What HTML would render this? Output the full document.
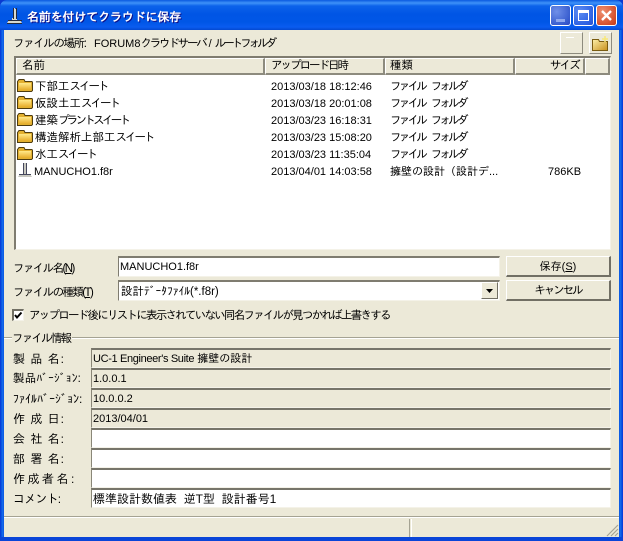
<!DOCTYPE html>
<html lang="ja"><head><meta charset="utf-8"><style>
html,body{margin:0;padding:0;background:#0a3ad0}
#w{position:relative;width:623px;height:541px;overflow:hidden;background:#0831d9;font:11px/14px "Liberation Sans","IPAGothic","Noto Sans CJK JP",sans-serif;color:#000;border-radius:7px 7px 0 0}
#w *{box-sizing:border-box}
.a{position:absolute;white-space:nowrap}
#tb{left:0;top:0;width:623px;height:30px;background:linear-gradient(180deg,#0a5ae0 0,#3f92f8 3px,#0c62ea 6px,#0055e5 14px,#0056e6 22px,#0a5cf0 27px,#0449d0 30px);border-radius:7px 7px 0 0}
#lb{left:0;top:30px;width:4px;height:511px;background:linear-gradient(90deg,#0831d9,#0855dd,#166aee,#0855dd)}
#rb{left:619px;top:30px;width:4px;height:511px;background:linear-gradient(90deg,#0855dd,#166aee,#0855dd,#0831d9)}
#bb{left:0;top:537px;width:623px;height:4px;background:#0a45d8}
#c{left:4px;top:30px;width:615px;height:507px;background:#ece9d8}
#title{left:27px;top:9px;color:#fff;font-size:12px;line-height:16px;letter-spacing:-.15px;font-weight:bold;text-shadow:1px 1px 0 #0f1089}
.wb{top:5px;width:21px;height:21px;border-radius:3px;border:1px solid #fff}
.lbl{left:13px}
.k{font-size:11.500px;letter-spacing:-1.600px}
.s{font-size:12px;letter-spacing:1px}
.fld{left:91px;width:520px;height:20px;border:1px solid;border-color:#7f7c70 #f4f2e8 #f4f2e8 #8a8778;border-top:2px solid #77756a;padding:2px 0 0 1px;line-height:14px;background:#ece9d8}
.w{background:#fff}
.hd{top:58px;height:17px;background:#ece9d8;border-right:2px solid #8d8b7e;border-bottom:2px solid #8d8b7e;border-top:1px solid #fff;border-left:1px solid #fff;padding-left:5px;line-height:15px;font-size:11.500px}
.r{line-height:14px}
.n{font-size:11.500px}
.n span{letter-spacing:-2px}
.t{font-size:11.500px;letter-spacing:-2.700px;word-spacing:5px;left:390px}
.btn{left:506px;width:105px;height:21px;background:#ece9d8;border:1px solid;border-color:#fff #716f64 #716f64 #fff;border-right-width:2px;border-bottom-width:2px;text-align:center;line-height:18px;padding-top:1px}
u{text-decoration:underline}
</style></head><body><div id="w">
<div class="a" id="tb"></div>
<div class="a" id="lb"></div><div class="a" id="rb"></div><div class="a" id="bb"></div>
<div class="a" id="c"></div>

<svg class="a" style="left:6px;top:7px" width="18" height="17" viewBox="0 0 18 17"><path d="M7 1h2v1h1v9h1v2h3l2 3H1l2-3h3v-2h1V2z" fill="#d8d8d0"/><path d="M7 1h1v11H7zM10 1h1v11h-1zM2 13h14v1H2zM1 16h15v1H1z" fill="#262a3c"/></svg>
<div class="a" id="title">名前を付けてクラウドに保存</div>

<div class="a wb" style="left:550px;background:radial-gradient(circle at 30% 30%,#6f8fe8,#3a5fd0 70%,#2c49c2)"></div>
<div class="a" style="left:556px;top:19px;width:9px;height:3px;background:#8fa8ee"></div>
<div class="a wb" style="left:573px;background:radial-gradient(circle at 30% 30%,#5d8cf2,#2f63e3 70%,#2a50d0)"></div>
<div class="a" style="left:578px;top:10px;width:11px;height:11px;border:1px solid #fff;border-top:3px solid #fff"></div>
<div class="a wb" style="left:596px;background:radial-gradient(circle at 30% 30%,#ee9070,#d6512e 70%,#c03a1c)"></div>
<svg class="a" style="left:596px;top:5px" width="21" height="21"><path d="M6 6l9 9M15 6l-9 9" stroke="#fff" stroke-width="2.400"/></svg>

<div class="a lbl k" style="top:37px;letter-spacing:-1.400px">ファイルの場所:</div>
<div class="a" style="left:94px;top:37px">FORUM8<span style="font-size:11.500px;letter-spacing:-2.200px">クラウドサーバ</span> / <span style="font-size:11.500px;letter-spacing:-3px">ルートフォルダ</span></div>

<div class="a" style="left:560px;top:32px;width:23px;height:22px;background:#ece9d8;border:1px solid;border-color:#fff #8d8b7e #8d8b7e #fff"></div>
<div class="a" style="left:566px;top:37px;width:8px;height:1px;background:#fff"></div>
<div class="a" style="left:589px;top:32px;width:23px;height:22px;background:#ece9d8;border:1px solid;border-color:#fff #8d8b7e #8d8b7e #fff"></div>
<svg class="a" style="left:592px;top:35px" width="18" height="16"><defs><linearGradient id="g2" x1="0" y1="0" x2="1" y2="1"><stop offset="0" stop-color="#fdf0a8"/><stop offset="1" stop-color="#c8901c"/></linearGradient></defs><path d="M0.500 4.500h6l1 2h8v9h-15z" fill="url(#g2)" stroke="#7a5c10"/><path d="M13 1v6M10 4h6" stroke="#f8e878" stroke-width="1.500"/></svg>

<div class="a" style="left:14px;top:56px;width:597px;height:194px;background:#fff;border:1px solid;border-color:#7f7c70 #f4f2e8 #f4f2e8 #7f7c70;border-top:2px solid #7f7c70;border-left:2px solid #7f7c70"></div>
<div class="a hd" style="left:16px;width:249px">名前</div>
<div class="a hd" style="left:265px;width:120px;letter-spacing:-2px">アップロード日時</div>
<div class="a hd" style="left:385px;width:130px;padding-left:4px">種類</div>
<div class="a hd" style="left:515px;width:70px;text-align:right;padding-right:4px;letter-spacing:-1.800px">サイズ</div>
<div class="a hd" style="left:585px;width:25px"></div>

<svg width="0" height="0" style="position:absolute"><defs><linearGradient id="g1" x1="0" y1="0" x2="0" y2="1"><stop offset="0" stop-color="#ffe98a"/><stop offset="1" stop-color="#e8b030"/></linearGradient><symbol id="f" viewBox="0 0 16 14"><path d="M.5 3.500L2 1.500h5l1 2h7l.5 1v8l-1 1h-14z" fill="#e2b030" stroke="#4e3c10"/><path d="M2 5h12v6.500H2z" fill="url(#g1)"/></symbol></defs></svg>
<svg class="a" style="left:17px;top:78px" width="16" height="14"><use href="#f"/></svg>
<svg class="a" style="left:17px;top:95px" width="16" height="14"><use href="#f"/></svg>
<svg class="a" style="left:17px;top:112px" width="16" height="14"><use href="#f"/></svg>
<svg class="a" style="left:17px;top:129px" width="16" height="14"><use href="#f"/></svg>
<svg class="a" style="left:17px;top:146px" width="16" height="14"><use href="#f"/></svg>
<svg class="a" style="left:17px;top:162px" width="16" height="16"><path d="M7 1h2v10h1v1h3l2 3H1l2-3h3v-1h1z" fill="#c8c8c0"/><path d="M6.500 1v11M9.500 1v11M2 12.500h12" stroke="#45485c" fill="none"/></svg>

<div class="a r n" style="left:35px;top:80px">下部工<span>スイート</span></div>
<div class="a r n" style="left:35px;top:97px">仮設土工<span>スイート</span></div>
<div class="a r n" style="left:35px;top:114px">建築<span style="letter-spacing:-2.700px">プラントスイート</span></div>
<div class="a r n" style="left:35px;top:131px">構造解析上部工<span>スイート</span></div>
<div class="a r n" style="left:35px;top:148px">水工<span>スイート</span></div>
<div class="a r" style="left:34px;top:165px">MANUCHO1.f8r</div>

<div class="a r" style="left:271px;top:80px">2013/03/18 18:12:46</div>
<div class="a r" style="left:271px;top:97px">2013/03/18 20:01:08</div>
<div class="a r" style="left:271px;top:114px">2013/03/23 16:18:31</div>
<div class="a r" style="left:271px;top:131px">2013/03/23 15:08:20</div>
<div class="a r" style="left:271px;top:148px">2013/03/23 11:35:04</div>
<div class="a r" style="left:271px;top:165px">2013/04/01 14:03:58</div>

<div class="a r t" style="top:80px">ファイル フォルダ</div>
<div class="a r t" style="top:97px">ファイル フォルダ</div>
<div class="a r t" style="top:114px">ファイル フォルダ</div>
<div class="a r t" style="top:131px">ファイル フォルダ</div>
<div class="a r t" style="top:148px">ファイル フォルダ</div>
<div class="a r" style="left:390px;top:165px">擁壁の設計（設計デ...</div>
<div class="a r" style="left:548px;top:165px">786KB</div>

<div class="a lbl k" style="top:262px">ファイル名(<u>N</u>)</div>
<div class="a lbl k" style="top:286px">ファイルの種類(<u>T</u>)</div>
<div class="a" style="left:118px;top:256px;width:382px;height:21px;background:#fff;border:1px solid;border-color:#7f7c70 #f4f2e8 #f4f2e8 #7f7c70;border-top-width:2px;padding:2px 0 0 1px">MANUCHO1.f8r</div>
<div class="a" style="left:118px;top:280px;width:382px;height:21px;background:#fff;border:1px solid;border-color:#7f7c70 #f4f2e8 #f4f2e8 #7f7c70;border-top-width:2px;padding:3px 0 0 2px;font-size:11.500px">設計ﾃﾞｰﾀﾌｧｲﾙ(*.f8r)</div>
<div class="a" style="left:481px;top:282px;width:17px;height:17px;background:#ece9d8;border:1px solid;border-color:#fff #716f64 #716f64 #fff"></div>
<svg class="a" style="left:485px;top:288px" width="9" height="6"><path d="M1 1h7L4.500 5z" fill="#000"/></svg>
<div class="a btn" style="top:256px">保存(<u>S</u>)</div>
<div class="a btn" style="top:280px;font-size:11.500px;letter-spacing:-2px">キャンセル</div>

<div class="a" style="left:12px;top:309px;width:12px;height:12px;background:#fff;border:1px solid;border-color:#716f64 #f4f2e8 #f4f2e8 #716f64;border-top-width:2px;border-left-width:2px"></div>
<svg class="a" style="left:14px;top:311px" width="9" height="9"><path d="M1 4l2 2.500L7.500 1.500" fill="none" stroke="#000" stroke-width="2"/></svg>
<div class="a" style="left:29px;top:309px;font-size:11.500px;letter-spacing:-1.750px">アップロード後にリストに表示されていない同名ファイルが見つかれば上書きする</div>

<div class="a" style="left:4px;top:337px;width:615px;height:1px;background:#a5a393"></div>
<div class="a" style="left:4px;top:338px;width:615px;height:1px;background:#fff"></div>
<div class="a" style="left:12px;top:332px;background:#ece9d8;padding-right:2px;font-size:11.500px;letter-spacing:-1.800px">ファイル情報</div>

<div class="a lbl s" style="top:352px">製 品 名:</div>
<div class="a fld" style="top:348px"><span style="letter-spacing:-.35px">UC-1 Engineer's Suite</span> 擁壁の設計</div>
<div class="a lbl" style="top:372px;font-size:11.500px;letter-spacing:.2px">製品ﾊﾞｰｼﾞｮﾝ:</div>
<div class="a fld" style="top:368px">1.0.0.1</div>
<div class="a lbl" style="top:392px;font-size:12px">ﾌｧｲﾙﾊﾞｰｼﾞｮﾝ:</div>
<div class="a fld" style="top:388px">10.0.0.2</div>
<div class="a lbl s" style="top:412px">作 成 日:</div>
<div class="a fld" style="top:408px">2013/04/01</div>
<div class="a lbl s" style="top:432px">会 社 名:</div>
<div class="a fld w" style="top:428px"></div>
<div class="a lbl s" style="top:452px">部 署 名:</div>
<div class="a fld w" style="top:448px"></div>
<div class="a lbl" style="top:472px;font-size:12px;letter-spacing:2.500px">作成者名:</div>
<div class="a fld w" style="top:468px"></div>
<div class="a lbl" style="top:492px;font-size:12px;letter-spacing:-.8px">コメント:</div>
<div class="a fld w" style="top:488px;height:20px;font-size:12px">標準設計数値表&nbsp; 逆T型&nbsp; 設計番号1</div>

<div class="a" style="left:4px;top:516px;width:615px;height:1px;background:#a5a393"></div>
<div class="a" style="left:4px;top:517px;width:615px;height:1px;background:#fff"></div>
<div class="a" style="left:409px;top:519px;width:1px;height:18px;background:#a5a393"></div>
<div class="a" style="left:411px;top:519px;width:1px;height:18px;background:#fff"></div>
<svg class="a" style="left:606px;top:524px" width="13" height="13"><path d="M12 1L1 12M12 5L5 12M12 9L9 12" stroke="#a5a393" stroke-width="1.200"/></svg>
</div></body></html>
